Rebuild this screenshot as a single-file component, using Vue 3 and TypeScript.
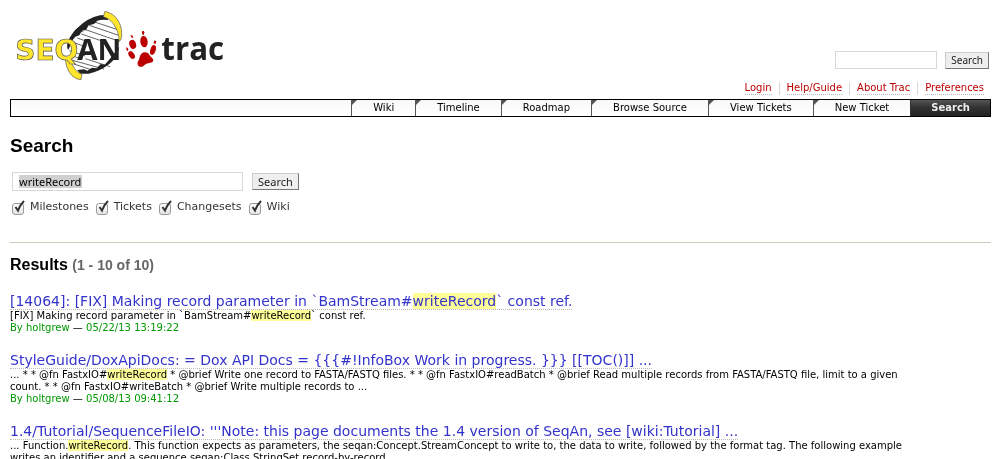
<script setup lang="ts">
import { ref } from 'vue'

interface Piece {
  text: string
  hit?: boolean
}

interface Result {
  title: Piece[]
  excerpt: Piece[]
  author: string
  date: string
}

const metaLinks = ['Login', 'Help/Guide', 'About Trac', 'Preferences']
const navItems = ['Wiki', 'Timeline', 'Roadmap', 'Browse Source', 'View Tickets', 'New Ticket', 'Search']
const activeItem = 'Search'

const quickQuery = ref('')
const query = ref('writeRecord')
const filters = ref([
  { id: 'milestone', label: 'Milestones', on: true },
  { id: 'ticket', label: 'Tickets', on: true },
  { id: 'changeset', label: 'Changesets', on: true },
  { id: 'wiki', label: 'Wiki', on: true },
])

// Splits a string so that every occurrence wrapped in «» becomes a highlighted piece.
function mark(source: string): Piece[] {
  return source
    .split(/(«[^»]*»)/)
    .filter((part) => part.length > 0)
    .map((part) => (part.startsWith('«') ? { text: part.slice(1, -1), hit: true } : { text: part }))
}

const results: Result[] = [
  {
    title: mark('[14064]: [FIX] Making record parameter in `BamStream#«writeRecord»` const ref.'),
    excerpt: mark('[FIX] Making record parameter in `BamStream#«writeRecord»` const ref.'),
    author: 'holtgrew',
    date: '05/22/13 13:19:22',
  },
  {
    title: mark('StyleGuide/DoxApiDocs: = Dox API Docs = {{{#!InfoBox Work in progress. }}} [[TOC()]] ...'),
    excerpt: mark(
      '... * * @fn FastxIO#«writeRecord» * @brief Write one record to FASTA/FASTQ files. * * @fn FastxIO#readBatch * @brief Read multiple records from FASTA/FASTQ file, limit to a given count. * * @fn FastxIO#writeBatch * @brief Write multiple records to ...',
    ),
    author: 'holtgrew',
    date: '05/08/13 09:41:12',
  },
  {
    title: mark("1.4/Tutorial/SequenceFileIO: '''Note: this page documents the 1.4 version of SeqAn, see [wiki:Tutorial] ..."),
    excerpt: mark(
      '... Function.«writeRecord». This function expects as parameters, the seqan:Concept.StreamConcept to write to, the data to write, followed by the format tag. The following example writes an identifier and a sequence seqan:Class.StringSet record-by-record.',
    ),
    author: '',
    date: '',
  },
]
</script>

<template>
  <div class="page">
    <header class="banner">
      <a class="logo" href="#" aria-label="SeqAn trac">
        <svg viewBox="45 30 630 213" width="210" height="71">
          <path d="M208 130Q222 88 272 60Q300 48 320 48Q350 70 358 120Q350 180 296 206Q262 216 232 212Q204 190 208 130Z" fill="#fff" />
          <g stroke="#444" stroke-width="2.5" fill="none">
            <path d="M284 66L350 88M268 76L356 106M254 88L358 124M244 102L300 121M232 114L268 127M222 128L250 138M208 152L256 168M212 166L236 174M256 176L330 200M214 180L312 207M222 192L276 210M240 92L250 96" />
          </g>
          <path d="M204 150Q196 134 210 112Q222 92 232 84Q262 54 300 46L320 45L325 60Q306 57 292 62L282 72L266 76L258 90L246 92L238 106L226 110Q214 122 208 144Z" fill="#222" />
          <path d="M358 140Q352 172 328 192Q300 214 266 221L240 221L232 210L252 208L262 212L276 203L290 205L302 192L314 194L330 176Z" fill="#222" />
          <path d="M315 34Q340 40 353 59Q370 86 363 119L357 124Q358 96 340 71Q328 55 310 50Z" fill="#ffe52b" stroke="#555" stroke-width="2" />
          <path d="M196 172Q196 204 215 226Q228 239 243 239L246 223Q222 216 211 178Z" fill="#ffe52b" stroke="#555" stroke-width="2" />
          <text x="46" y="180" class="seq">SEQ</text>
          <text x="232" y="180" class="an">AN</text>
          <g fill="#bb0000">
            <ellipse cx="398" cy="133" rx="10" ry="14" transform="rotate(-18 398 133)" />
            <path d="M391 105l7 2 2 8-6-3z" />
            <ellipse cx="432" cy="125" rx="11" ry="17" transform="rotate(-8 432 125)" />
            <path d="M426 94q6-3 7 3l-2 9-5-4z" />
            <ellipse cx="459" cy="150" rx="8" ry="15" transform="rotate(18 459 150)" />
            <path d="M463 121l6 3-3 9-5-3z" />
            <ellipse cx="395" cy="165" rx="8" ry="13" transform="rotate(-34 395 165)" />
            <path d="M379 141l6 5-1 8-5-5z" />
            <path d="M424 161Q434 153 445 160Q450 170 459 177Q463 188 448 189Q438 190 431 197Q422 204 415 197Q409 190 417 179Q418 168 424 161Z" />
          </g>
          <text x="484" y="180" class="trac">trac</text>
        </svg>
      </a>
      <form class="quick" @submit.prevent>
        <input v-model="quickQuery" type="text" aria-label="Quick search" />
        <button type="submit">Search</button>
      </form>
    </header>

    <nav class="meta" aria-label="Account">
      <ul>
        <li v-for="link in metaLinks" :key="link"><a href="#">{{ link }}</a></li>
      </ul>
    </nav>

    <nav class="main-nav" aria-label="Main">
      <ul>
        <li v-for="item in navItems" :key="item" :class="{ active: item === activeItem }">
          <a href="#">{{ item }}</a>
        </li>
      </ul>
    </nav>

    <main>
      <h1>Search</h1>
      <form class="full" @submit.prevent>
        <div class="row">
          <input v-model="query" class="query" type="text" aria-label="Search terms" />
          <span class="selection" aria-hidden="true"></span>
          <button type="submit">Search</button>
        </div>
        <div class="filters">
          <label v-for="filter in filters" :key="filter.id" :for="filter.id">
            <span class="tick">
              <input :id="filter.id" v-model="filter.on" type="checkbox" />
              <svg v-if="filter.on" viewBox="0 0 14 15" width="14" height="15" aria-hidden="true">
                <path d="M3.5 7L6 10.500Q8 5 12 1" />
              </svg>
            </span>
            <span>{{ filter.label }}</span>
          </label>
        </div>
      </form>

      <hr />

      <h2>Results <span>(1 - 10 of 10)</span></h2>
      <dl>
        <template v-for="(result, index) in results" :key="index">
          <dt>
            <a href="#"><template v-for="(piece, i) in result.title" :key="i"><mark v-if="piece.hit">{{ piece.text }}</mark><template v-else>{{ piece.text }}</template></template></a>
          </dt>
          <dd class="excerpt"><template v-for="(piece, i) in result.excerpt" :key="i"><mark v-if="piece.hit">{{ piece.text }}</mark><template v-else>{{ piece.text }}</template></template></dd>
          <dd v-if="result.author" class="author">
            <span>By {{ result.author }}</span> — <span>{{ result.date }}</span>
          </dd>
        </template>
      </dl>
    </main>
  </div>
</template>

<style>
html {
  overflow: hidden;
}
body {
  margin: 0;
  background: #fff;
}
</style>

<style scoped>
.page {
  box-sizing: border-box;
  padding: 10px 10px 0;
  height: 100vh;
  overflow: hidden;
  color: #000;
  font: 13px/16px Verdana, "DejaVu Sans", sans-serif;
}
ul,
dl,
dd,
h1,
h2 {
  margin: 0;
  padding: 0;
}
ul {
  display: flex;
  justify-content: flex-end;
  list-style: none;
}
a {
  text-decoration: none;
}
.banner {
  display: flex;
  justify-content: space-between;
  align-items: flex-end;
}
.logo {
  display: flex;
  padding-left: 5px;
}
.seq {
  fill: #ffe52b;
  stroke: #555;
  stroke-width: 2px;
  font: bold 84px "DejaVu Sans", sans-serif;
}
.an {
  fill: #222;
  font: bold 88px "Noto Sans", sans-serif;
}
.trac {
  fill: #222;
  font: bold 94px "Open Sans", sans-serif;
}
input[type="text"] {
  box-sizing: border-box;
  border: 1px solid #d7d7d7;
  border-radius: 0;
  background: #fff;
  font: 11px "Noto Sans", sans-serif;
  outline: none;
}
button {
  box-sizing: border-box;
  height: 17px;
  padding: 0 5px;
  border: 1px solid #ccc;
  border-right-color: #777;
  border-bottom-color: #777;
  border-radius: 0;
  background: #eee;
  color: #222;
  font: 11px/14px "Noto Sans", sans-serif;
}
.quick {
  display: flex;
  align-items: center;
  gap: 8px;
  padding: 0 2px 12px 0;
}
.quick input {
  width: 102px;
  height: 18px;
}
.quick button {
  font-size: 10px;
}
.meta {
  margin-top: 1px;
  font-size: 10px;
  line-height: 12px;
}
.meta li {
  padding: 0 7px;
  border-right: 1px solid #d7d7d7;
}
.meta li:last-child {
  border: 0;
}
.meta a {
  display: block;
  border-bottom: 1px dotted #bbb;
  color: #b00;
}
.main-nav {
  margin-top: 4px;
  border: 1px solid #000;
  background: linear-gradient(#f8f8f8, #fff);
  font-size: 10px;
  line-height: 16px;
}
.main-nav li {
  border-left: 1px solid #555;
  background: linear-gradient(135deg, #555 3px, transparent 4px);
}
.main-nav a {
  display: block;
  padding: 0 21px;
  color: #000;
}
.main-nav .active {
  border-left-color: #333;
  background: linear-gradient(#555, #333 45%, #222);
}
.main-nav .active a {
  padding: 0 20px;
  color: #eee;
  font-weight: bold;
}
h1,
h2 {
  font-family: Arial, "Liberation Sans", sans-serif;
  font-weight: bold;
}
h1 {
  margin-top: 18px;
  font-size: 19px;
  line-height: 22px;
}
.full {
  padding: 15px 2px 0;
}
.row {
  position: relative;
  display: flex;
  align-items: center;
  gap: 9px;
}
.query {
  width: 231px;
  height: 19px;
  padding: 0 6px;
}
.selection {
  position: absolute;
  top: 3px;
  left: 7px;
  width: 63px;
  height: 13px;
  background: #d0d0d0;
  mix-blend-mode: multiply;
}
.filters {
  display: flex;
  gap: 7px;
  margin-top: 8px;
  color: #333;
  font-size: 11px;
  line-height: 16px;
}
.filters label {
  display: flex;
  gap: 4px;
}
.tick {
  position: relative;
  width: 14px;
  height: 17px;
}
.tick input {
  box-sizing: border-box;
  width: 12px;
  height: 12px;
  margin: 4px 0 0;
  border: 1px solid #999;
  border-radius: 3px;
  background: linear-gradient(#fff, #e4e4e4);
  appearance: none;
  display: block;
}
.tick svg {
  position: absolute;
  top: 1px;
  left: 0;
}
.tick path {
  fill: none;
  stroke: #333;
  stroke-width: 2;
}
hr {
  height: 1px;
  margin: 26px 0 0;
  border: 0;
  background: #ccccbb;
}
h2 {
  margin-top: 12px;
  font-size: 16px;
  line-height: 20px;
}
h2 span {
  color: #666;
  font-size: 14px;
}
dl {
  margin-top: 18px;
}
dt {
  font-size: 14px;
  line-height: 17px;
}
dt a {
  border-bottom: 1px dotted #bbb;
  color: #33c;
}
mark {
  background: #ffff99;
  color: inherit;
}
dd {
  font-size: 10px;
  line-height: 12px;
}
.excerpt {
  padding-right: 68px;
}
.author {
  margin-bottom: 18px;
}
.author span {
  color: #090;
}
</style>
